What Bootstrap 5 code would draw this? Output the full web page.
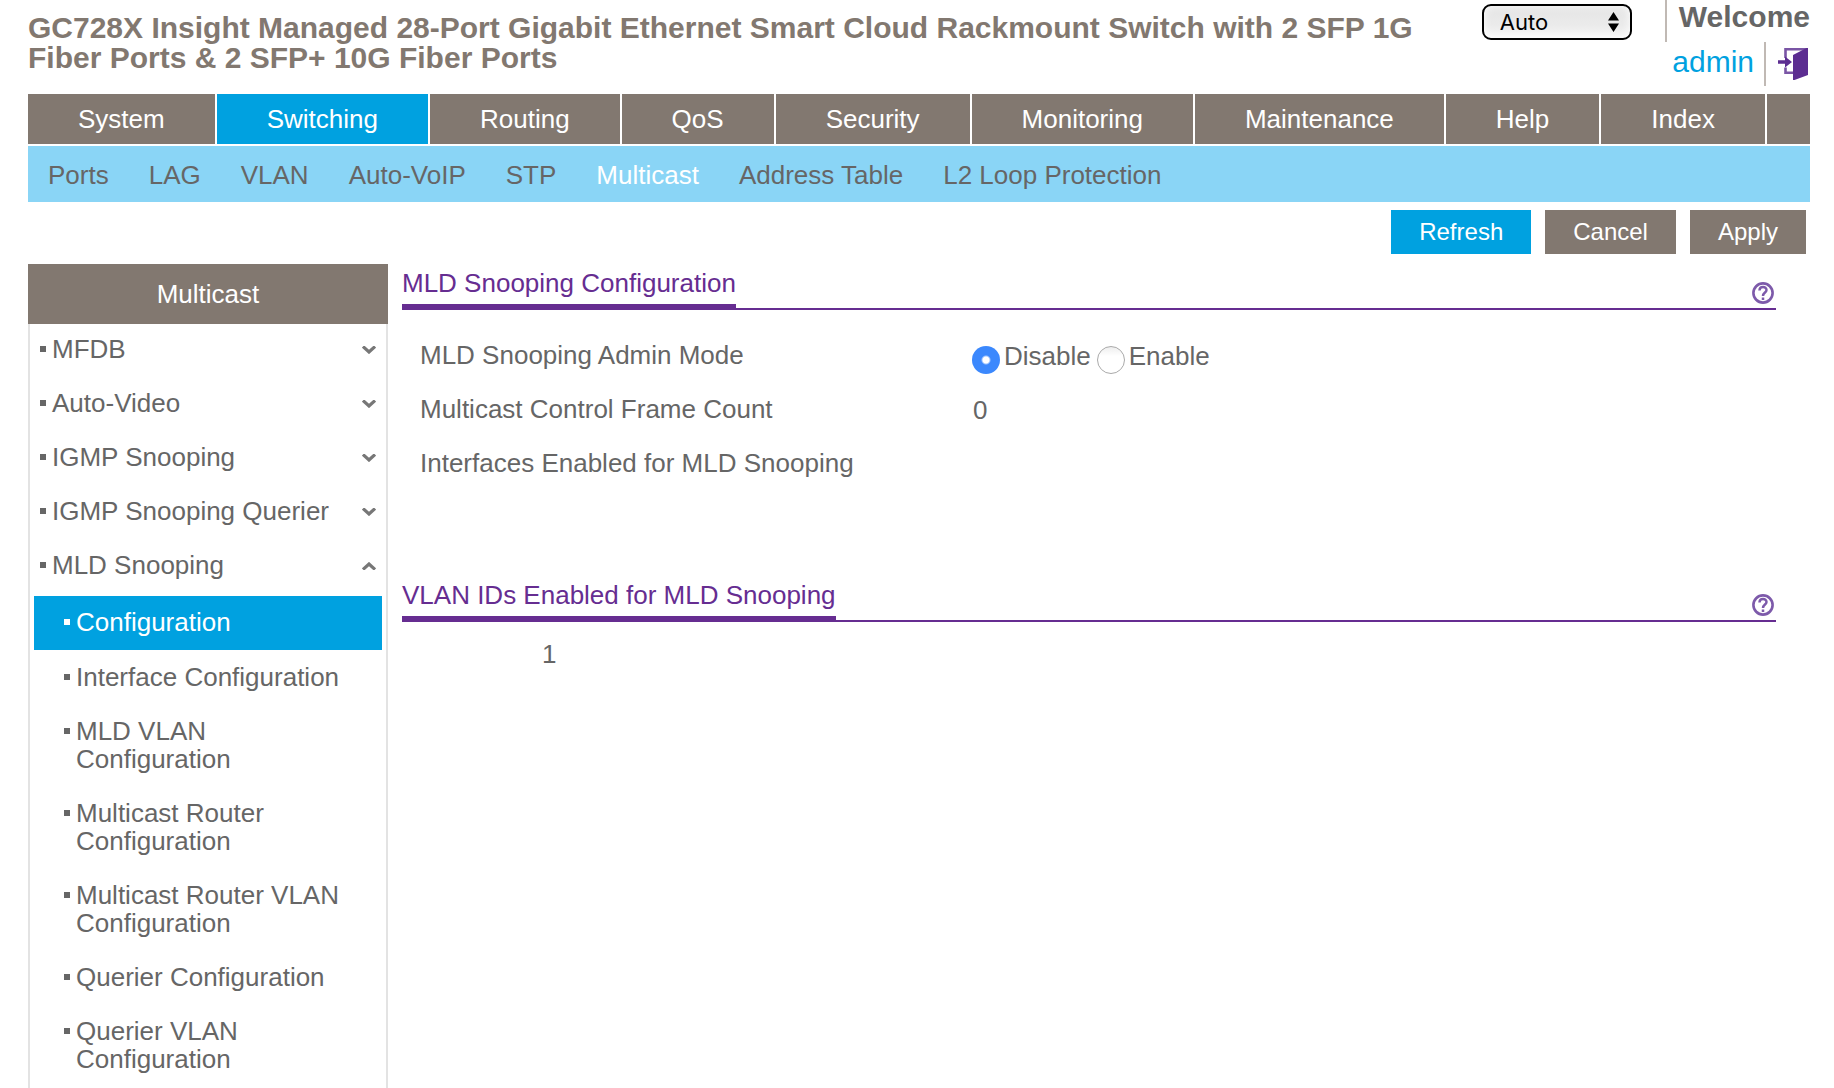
<!DOCTYPE html>
<html lang="en">
<head>
<meta charset="utf-8">
<meta name="viewport" content="width=device-width, initial-scale=1">
<title>MLD Snooping Configuration</title>
<link href="https://cdn.jsdelivr.net/npm/bootstrap@5.3.0/dist/css/bootstrap.min.css" rel="stylesheet">
<style>
  :root { --brown: #827870; --blue: #00a1e0; --sky: #8ad5f6; --ink: #666; --purple: #662d91; }
  body { font-family: "Liberation Sans", Arial, sans-serif; font-size: 26px; line-height: 28px; color: var(--ink); background: #fff; }
  a { color: inherit; text-decoration: none; }
  .page-shell { padding: 0 24px 0 28px; }
  .device-name { font-size: 30px; line-height: 30px; font-weight: 700; color: var(--brown); padding: 13px 24px 0 0; }
  .top-bar { height: 86px; margin-bottom: 8px; }

  .refresh-wrap { width: 150px; margin: 4px 33px 0 0; }
  .refresh-select { appearance: none; width: 100%; height: 36px; padding: 0 16px; border: 2px solid #000; border-radius: 9px; font: 22px/30px Inter, sans-serif; color: #000; background: linear-gradient(#e4e4e4, #ebebeb 60%, #f6f6f6); box-shadow: inset 0 0 8px #fff; }
  .refresh-arrows { position: absolute; right: 13px; top: 8px; pointer-events: none; }
  .user-hello { height: 42px; line-height: 34px; font-size: 30px; padding-left: 12px; border-left: 2px solid #c0b9b4; }
  .user-row { height: 44px; line-height: 40px; font-size: 30px; }
  .user-name { color: var(--blue); padding-right: 10px; border-right: 2px solid #c0b9b4; }
  .logout-btn { padding: 6px 2px 0 12px; line-height: 0; }

  .main-tabs { gap: 2px; margin-bottom: 2px; }
  .main-tabs li { background: var(--brown); height: 50px; }
  .main-tabs a { display: block; padding: 0 50px; line-height: 50px; color: #fff; }
  .main-tabs li.current { background: var(--blue); }
  .sub-tabs { background: var(--sky); height: 56px; padding-left: 20px; gap: 40px; line-height: 58px; }
  .sub-tabs .current { color: #fff; }

  .action-bar { gap: 14px; padding: 8px 4px 10px 0; }
  .action-bar .btn { --bs-btn-bg: var(--brown); --bs-btn-color: #fff; --bs-btn-hover-bg: #6f665f; --bs-btn-hover-color: #fff; font-size: 24px; line-height: 44px; padding: 0 28px; border: 0; border-radius: 0; }
  .action-bar .btn-go { --bs-btn-bg: var(--blue); --bs-btn-hover-bg: #008cc4; }

  .side-nav { width: 360px; border: solid #e3e3e3; border-width: 0 2px; }
  .side-title { margin: 0 -2px; font-size: 26px; line-height: 60px; background: var(--brown); color: #fff; }
  .side-list { gap: 2px; }
  .side-list > li > a { padding: 11px 10px 13px; }
  .side-list a { display: flex; align-items: flex-start; }
  .side-list a::before { content: ""; flex: none; width: 6px; height: 6px; margin: 11px 6px 0 0; background: currentColor; }
  .side-list svg { margin: 11px 0 0 auto; }
  .side-sub { padding: 4px 4px 0; }
  .side-sub a { padding: 12px 30px 14px; }
  .side-sub .current { background: var(--blue); color: #fff; margin-bottom: 1px; }

  .content-pane { padding: 4px 34px 0 14px; }
  .pane-head { border-bottom: 2px solid var(--purple); color: var(--purple); height: 42px; }
  .pane-head h2 { font-size: 26px; line-height: 30px; height: 42px; border-bottom: 6px solid var(--purple); }
  .help-btn { line-height: 0; padding: 0 2px 4px 0; }
  .setting-rows { padding: 30px 0 78px 18px; }
  .setting-line { height: 54px; line-height: 30px; }
  .setting-line > :first-child { flex: 0 0 552px; }
  .mode-pick { gap: 4px; }
  .mode-pick label { margin-right: 2px; line-height: 32px; }
  .mode-pick .form-check-input { width: 28px; height: 28px; margin: 6px 0 0; border: 1px solid #aaa; background: linear-gradient(#eee, #fff 35%); }
  .mode-pick .form-check-input:checked { border: 0; background: radial-gradient(circle, #fff 3px, #3b88fd 5px); }
  .frame-count { line-height: 32px; padding-left: 1px; }
  .vlan-cells { padding: 18px 0 0 140px; }
</style>
</head>
<body>
<div class="page-shell d-flex flex-column min-vh-100">
  <header class="top-bar d-flex align-items-start">
    <h1 class="device-name flex-grow-1 m-0">GC728X Insight Managed 28-Port Gigabit Ethernet Smart Cloud Rackmount Switch with 2 SFP 1G Fiber Ports &amp; 2 SFP+ 10G Fiber Ports</h1>
    <div class="refresh-wrap position-relative flex-shrink-0">
      <select class="refresh-select d-block" aria-label="Connection mode"><option>Auto</option><option>HTTP</option></select>
      <svg class="refresh-arrows" width="11" height="20" viewBox="0 0 11 20" aria-hidden="true"><path d="M0 8.5L5.500 0L11 8.500zM0 11.500h11L5.500 20z"/></svg>
    </div>
    <div class="flex-shrink-0">
      <div class="user-hello fw-bold">Welcome</div>
      <div class="user-row d-flex justify-content-end">
        <a class="user-name" href="#">admin</a>
        <button class="logout-btn btn border-0 align-self-start" type="button" aria-label="Log out">
          <svg width="30" height="32" viewBox="0 0 30 32"><path d="M7.500 10V1.200H29M7.500 19.500V24.800H18" fill="none" stroke="#7a55a5" stroke-width="2.600"/><path d="M15 7L28.500 0H30V27L16.500 32H15zM0 12.200h7V8.500L14 14L7 19.500V15.800H0z" fill="#5c2d91"/></svg>
        </button>
      </div>
    </div>
  </header>

  <nav aria-label="Main">
    <ul class="main-tabs list-unstyled d-flex">
      <li><a href="#">System</a></li>
      <li class="current"><a href="#" aria-current="true">Switching</a></li>
      <li><a href="#">Routing</a></li>
      <li><a href="#">QoS</a></li>
      <li><a href="#">Security</a></li>
      <li><a href="#">Monitoring</a></li>
      <li><a href="#">Maintenance</a></li>
      <li><a href="#">Help</a></li>
      <li><a href="#">Index</a></li>
      <li class="flex-grow-1" aria-hidden="true"></li>
    </ul>
    <div class="sub-tabs d-flex">
      <a href="#">Ports</a><a href="#">LAG</a><a href="#">VLAN</a><a href="#">Auto-VoIP</a><a href="#">STP</a><a class="current" href="#" aria-current="true">Multicast</a><a href="#">Address Table</a><a href="#">L2 Loop Protection</a>
    </div>
  </nav>

  <div class="action-bar d-flex justify-content-end">
    <button class="btn btn-go" type="button">Refresh</button>
    <button class="btn" type="button">Cancel</button>
    <button class="btn" type="submit" form="mldForm">Apply</button>
  </div>

  <div class="d-flex flex-grow-1">
    <nav class="side-nav flex-shrink-0" aria-label="Multicast">
      <h2 class="side-title text-center fw-normal mb-0">Multicast</h2>
      <ul class="side-list list-unstyled d-flex flex-column m-0">
        <li><a href="#">MFDB<svg width="14" height="8" viewBox="0 0 14 8"><path d="M1 0.500L7 6L13 0.500" fill="none" stroke="#777" stroke-width="3.200"/></svg></a></li>
        <li><a href="#">Auto-Video<svg width="14" height="8" viewBox="0 0 14 8"><path d="M1 0.500L7 6L13 0.500" fill="none" stroke="#777" stroke-width="3.200"/></svg></a></li>
        <li><a href="#">IGMP Snooping<svg width="14" height="8" viewBox="0 0 14 8"><path d="M1 0.500L7 6L13 0.500" fill="none" stroke="#777" stroke-width="3.200"/></svg></a></li>
        <li><a href="#">IGMP Snooping Querier<svg width="14" height="8" viewBox="0 0 14 8"><path d="M1 0.500L7 6L13 0.500" fill="none" stroke="#777" stroke-width="3.200"/></svg></a></li>
        <li><a href="#">MLD Snooping<svg width="14" height="8" viewBox="0 0 14 8"><path d="M1 7.500L7 2L13 7.500" fill="none" stroke="#777" stroke-width="3.200"/></svg></a>
          <ul class="side-sub list-unstyled">
            <li><a class="current" href="#" aria-current="page">Configuration</a></li>
            <li><a href="#">Interface Configuration</a></li>
            <li><a href="#">MLD VLAN<br>Configuration</a></li>
            <li><a href="#">Multicast Router<br>Configuration</a></li>
            <li><a href="#">Multicast Router VLAN<br>Configuration</a></li>
            <li><a href="#">Querier Configuration</a></li>
            <li><a href="#">Querier VLAN<br>Configuration</a></li>
          </ul>
        </li>
      </ul>
    </nav>

    <main class="content-pane flex-grow-1">
      <section>
        <div class="pane-head d-flex justify-content-between">
          <h2 class="fw-normal m-0">MLD Snooping Configuration</h2>
          <button class="help-btn btn border-0 align-self-end" type="button" aria-label="Help on MLD snooping">
            <svg width="22" height="22" viewBox="0 0 22 22" fill="none" stroke="#7d5aaa"><circle cx="11" cy="11" r="9.600" stroke-width="2.600"/><path d="M7.500 8.500C7.500 3.800 14.500 4 14.500 8C14.500 10.500 11 10.500 11 14M11 15.500V18" stroke-width="2.500"/></svg>
          </button>
        </div>
        <form id="mldForm" class="setting-rows">
          <div class="setting-line d-flex">
            <span id="modeLabel">MLD Snooping Admin Mode</span>
            <div class="mode-pick d-flex align-items-start" role="radiogroup" aria-labelledby="modeLabel">
              <input class="form-check-input" type="radio" name="mode" id="modeOff" checked><label for="modeOff">Disable</label>
              <input class="form-check-input" type="radio" name="mode" id="modeOn"><label for="modeOn">Enable</label>
            </div>
          </div>
          <div class="setting-line d-flex"><span>Multicast Control Frame Count</span><span class="frame-count">0</span></div>
          <div class="setting-line d-flex"><span>Interfaces Enabled for MLD Snooping</span></div>
        </form>
      </section>
      <section>
        <div class="pane-head d-flex justify-content-between">
          <h2 class="fw-normal m-0">VLAN IDs Enabled for MLD Snooping</h2>
          <button class="help-btn btn border-0 align-self-end" type="button" aria-label="Help on VLAN IDs">
            <svg width="22" height="22" viewBox="0 0 22 22" fill="none" stroke="#7d5aaa"><circle cx="11" cy="11" r="9.600" stroke-width="2.600"/><path d="M7.500 8.500C7.500 3.800 14.500 4 14.500 8C14.500 10.500 11 10.500 11 14M11 15.500V18" stroke-width="2.500"/></svg>
          </button>
        </div>
        <div class="vlan-cells">1</div>
      </section>
    </main>
  </div>
</div>
<script src="https://cdn.jsdelivr.net/npm/bootstrap@5.3.0/dist/js/bootstrap.bundle.min.js"></script>
</body>
</html>
